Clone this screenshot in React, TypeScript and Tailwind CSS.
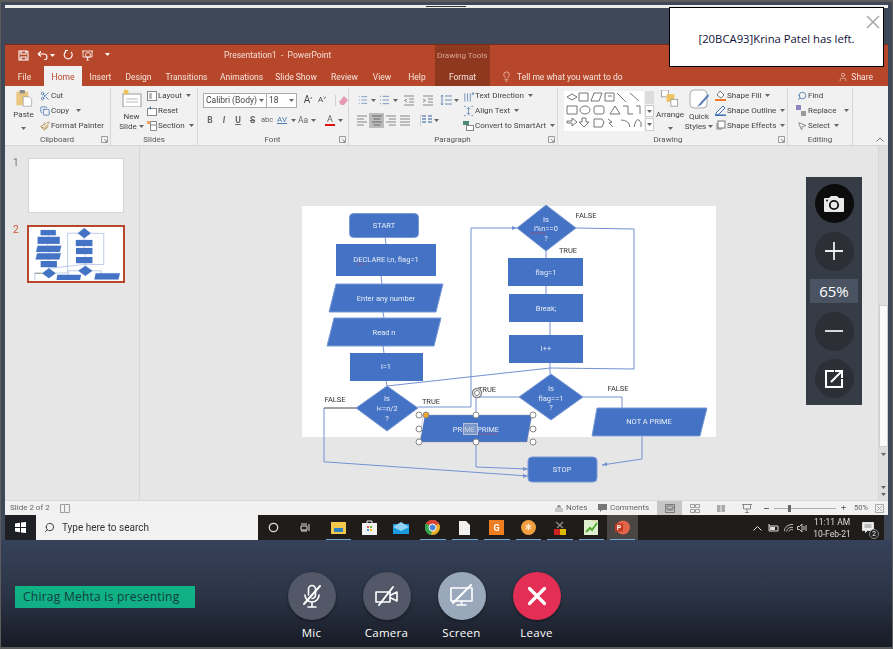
import React from "react";
import { Scissors, Copy, Paintbrush, Search, Lightbulb, User, MousePointer2 } from "lucide-react";

const Caret = ({ c = "#666" }: { c?: string }) => (
  <svg width="5" height="3" viewBox="0 0 5 3" className="inline-block shrink-0"><path d="M0 0h5L2.5 3z" fill={c} /></svg>
);

const FW = ({ w, c, children, cls = "" }: { w: number; c?: boolean; children?: React.ReactNode; cls?: string }) => (
  <div style={{ width: w }} className={`shrink-0 flex items-center ${c === false ? "" : "justify-center"} ${cls}`}>{children}</div>
);

const Row = ({ icon, text, caret, w }: { icon: React.ReactNode; text: string; caret?: boolean; w?: number }) => (
  <div className="h-[15px] flex items-center whitespace-nowrap gap-[1px]" style={{ width: w }}>
    <span className="w-[11px] h-[13px] flex items-center justify-center shrink-0">{icon}</span>
    <span>{text}</span>
    {caret && <span className="ml-[3px] flex"><Caret /></span>}
  </div>
);

const Launcher = () => (
  <svg width="7" height="7" viewBox="0 0 7 7" className="shrink-0"><path d="M.5 6.5v-6h6v6zM3 3l3 3M6 4v2H4" fill="none" stroke="#888" strokeWidth=".8" /></svg>
);

const Group = ({ w, label, children, launcher, lx = 0 }: { w: number; label: string; children: React.ReactNode; launcher?: boolean; lx?: number }) => (
  <div style={{ width: w }} className="shrink-0 h-full flex flex-col border-r border-[#d6d6d6]">
    <div className="h-[46px] flex overflow-hidden">{children}</div>
    <div className="h-[11px] flex items-center text-[#555]">
      <div className="flex-1 text-center" style={{ paddingLeft: lx }}>{label}</div>
      {launcher && <span className="mr-[2px]"><Launcher /></span>}
    </div>
  </div>
);

const LineIcon = ({ d, c = "#666", w = 12, h = 12, sw = 1 }: { d: string; c?: string; w?: number; h?: number; sw?: number }) => (
  <svg width={w} height={h} viewBox="0 0 12 12"><path d={d} fill="none" stroke={c} strokeWidth={sw} /></svg>
);

const Para = ({ pts, fill = "#4472c4", stroke = "#7b9ad6" }: { pts: string; fill?: string; stroke?: string }) => <polygon points={pts} fill={fill} stroke={stroke} strokeWidth="1" />;

const FlowShapes = ({ lw = 1, lc = "#7391d2" }: { lw?: number; lc?: string }) => (
  <g>
    <g fill="none" stroke={lc} strokeWidth={lw}>
      <path d="M385 237l1 7M381 276l1 8M383 312l1 6M383 346l1 7M386 381l1 5" />
      <path d="M387 386L550 368M550 363v11M550 368l84 1V229l-58-1" />
      <path d="M517 228h-46v179h-53M546 251v7M546 286v8M550 322v13" />
      <path d="M519 397h-43v18M583 397h39v11" />
      <path d="M476 442v25l52 2M642 436v23l-40 6" />
      <path d="M324 408v54h3l201 14" />
    </g>
    <path d="M356 408h-32" stroke="#444" strokeWidth={lw} />
    <g fill={lc}>
      <path d="M517 228l-5-2v4zM528 469l-5-2v4zM528 476l-5-2v4zM602 465l5-3v4z" />
    </g>
    <rect x="349.5" y="213.5" width="69" height="24" rx="4" fill="#4472c4" stroke="#7b9ad6" />
    <rect x="336" y="244" width="100" height="32" fill="#4472c4" />
    <Para pts="336,284 443,284 436,312 329,312" />
    <Para pts="334,318 441,318 434,346 327,346" />
    <rect x="350" y="353" width="73" height="28" fill="#4472c4" />
    <Para pts="387,386 418,408 387,431 356,408" />
    <Para pts="546,205 576,228 546,251 517,228" />
    <rect x="508" y="258" width="75" height="28" fill="#4472c4" />
    <rect x="509" y="294" width="74" height="28" fill="#4472c4" />
    <rect x="509" y="335" width="74" height="28" fill="#4472c4" />
    <Para pts="551,374 583,397 551,420 519,397" />
    <Para pts="597,408 707,408 700,436 592,436" />
    <polygon points="425,415 532,415 527,442 420,442" fill="#4472c4" />
    <rect x="528" y="457" width="69" height="25" rx="4" fill="#4472c4" stroke="#7b9ad6" />
  </g>
);

const T = ({ x, y, children, fill = "#e8eef8", anchor = "middle", size = 7.5 }: { x: number; y: number; children: React.ReactNode; fill?: string; anchor?: "middle" | "start"; size?: number }) => (
  <text x={x} y={y} fill={fill} fontSize={size} textAnchor={anchor} fontFamily="Roboto, sans-serif">{children}</text>
);

const Handle = ({ x, y, c = "#fff" }: { x: number; y: number; c?: string }) => <circle cx={x} cy={y} r="3" fill={c} stroke="#888" strokeWidth="1" />;

const Canvas = () => (
  <svg width="738" height="354" viewBox="140 146 738 354" className="block">
    <rect x="302" y="206" width="414" height="231" fill="#fff" />
    <FlowShapes />
    <T x={384} y={227.5}>START</T>
    <T x={386} y={262}>DECLARE i,n, flag=1</T>
    <T x={386} y={300.500}>Enter any number</T>
    <T x={384} y={334.500}>Read n</T>
    <T x={386} y={369}>i=1</T>
    <T x={387} y={401}>Is</T>
    <T x={387} y={411}>i&lt;=n/2</T>
    <T x={387} y={421}>?</T>
    <T x={546} y={221.500}>Is</T>
    <T x={546} y={231}>i%n==0</T>
    <T x={546} y={240.500}>?</T>
    <T x={546} y={274.500}>flag=1</T>
    <T x={546} y={310.500}>Break;</T>
    <T x={546} y={351}>i++</T>
    <T x={551} y={391}>Is</T>
    <T x={551} y={400.500}>flag==1</T>
    <T x={551} y={410}>?</T>
    <T x={649} y={423.500}>NOT A PRIME</T>
    <T x={476} y={431.500}>PRIME PRIME</T>
    <T x={562} y={471.500}>STOP</T>
    <path d="M531 233h14M357 264h10M478 434h20" stroke="#d33" strokeWidth=".7" strokeDasharray="1.5 1" fill="none" />
    <T x={586} y={218} fill="#333">FALSE</T>
    <T x={568} y={253} fill="#333">TRUE</T>
    <T x={335} y={402} fill="#333">FALSE</T>
    <T x={431} y={404} fill="#333">TRUE</T>
    <T x={487} y={392} fill="#333">TRUE</T>
    <T x={618} y={391} fill="#333">FALSE</T>
    <rect x="463.5" y="423.5" width="14" height="11" fill="#a9b6d0" fillOpacity="0.55" stroke="#b9c3d8" />
    <path d="M423 415h109l-5 27H420z" fill="none" stroke="#999" strokeDasharray="1 1" strokeWidth=".8" />
    <circle cx="477" cy="393" r="4.5" fill="#fff" stroke="#888" strokeWidth="1.5" />
    <circle cx="477" cy="393" r="2.5" fill="none" stroke="#888" strokeWidth="1" />
    {[[419, 415], [476, 415], [533, 415], [419, 429], [533, 429], [419, 442], [476, 442], [533, 442]].map(([x, y]) => (
      <Handle key={`${x}-${y}`} x={x} y={y} />
    ))}
    <Handle x={426} y={415} c="#efa52f" />
  </svg>
);

const ShapesGallery = () => (
  <svg width="80" height="40" viewBox="0 0 80 40" className="block">
    <g fill="none" stroke="#666" strokeWidth=".9">
      <path d="M3 6l5-3 5 3-5 3zM15 2h9v8h-9zM27 10l3-8h8l-3 8zM41 2h9v8h-9zM44 5h4M53 2l9 9M66 2l9 8" />
      <path d="M3 15h10v8H3z" /><ellipse cx="21" cy="19" rx="5" ry="4" /><rect x="30" y="15" width="10" height="8" rx="2" />
      <path d="M46 23l5-8 5 8zM59 15h5v8h5M72 15h4v8" />
      <path d="M3 30h5v-3l5 4-5 4v-3H3zM18 27h4v4h3l-5 5-5-5h3zM30 28h8l2 3-2 5h-8zM44 28l4 3-3 1 4 4M57 29q8 0 9 7M70 36q2-9 5-7t2 7" />
    </g>
  </svg>
);

const Thumb = () => (
  <svg width="92" height="52" viewBox="302 206 414 231" className="block">
    <rect x="302" y="206" width="414" height="231" fill="#fff" />
    <FlowShapes lw={3} lc="#9db4e2" />
  </svg>
);

const TaskIcon = ({ w = 31, active, line = true, children }: { w?: number; active?: boolean; line?: boolean; children: React.ReactNode }) => (
  <div style={{ width: w }} className={`relative h-full shrink-0 flex items-center justify-center ${active ? "bg-[#4a4644]" : ""}`}>
    {children}
    {line && <span className="absolute bottom-0 left-[3px] right-[3px] h-[1px] bg-[#6fa8d8]" />}
  </div>
);

const CircleBtn = ({ bg, label, children }: { bg: string; label: string; children: React.ReactNode }) => (
  <div className="w-[75px] flex flex-col items-center">
    <div style={{ backgroundColor: bg }} className="w-[48px] h-[48px] rounded-full flex items-center justify-center shadow-[0_1px_3px_rgba(0,0,0,0.45)]">{children}</div>
    <div className="mt-[5px] text-[11.5px] leading-[16px] text-white tracking-[0.3px] font-['Open_Sans',sans-serif]">{label}</div>
  </div>
);

const ZoomBtn = ({ dark, children }: { dark?: boolean; children: React.ReactNode }) => (
  <div className={`w-[39px] h-[39px] rounded-full flex items-center justify-center ${dark ? "bg-[#0c0c0c]" : "bg-[#2c2f35]"}`}>{children}</div>
);

export default function App() {
  return (
    <div className="relative w-[893px] h-[649px] overflow-hidden flex flex-col border-x border-y-2 border-[#5c5c5c] bg-[#3e4859] font-['Roboto',sans-serif]">
      {/* Top bar */}
      <div className="h-[42px] shrink-0 px-[4px] pt-[3px]">
        <div className="relative h-[3px] bg-[#eeeeee]">
          <span className="absolute left-[421px] top-[1px] w-[40px] h-[1px] bg-[#333]" />
        </div>
      </div>

      {/* Shared screen */}
      <div className="mx-[4px] h-[496px] shrink-0 flex flex-col blur-[0.4px] text-[8px] leading-[10px] text-[#444]">
        {/* Title bar */}
        <div className="h-[22px] shrink-0 flex bg-[#b7472a] border-t border-[#7c2c16] text-[#f6e3dc] pb-[1px]">
          <div className="w-[219px] flex items-center pl-[13px] gap-[8px]">
            <svg width="11" height="11" viewBox="0 0 11 11"><path d="M1 1h8l1 1v8H1zM3 1v3h5V1M3 10V7h5v3" fill="none" stroke="#fff" strokeWidth="1.1" /></svg>
            <span className="flex items-center gap-[2px]">
              <svg width="11" height="9" viewBox="0 0 11 9"><path d="M1 3l3-2.5M1 3l3 2.5M1 3h6q3 0 3 3t-3 3" fill="none" stroke="#fff" strokeWidth="1.1" /></svg>
              <Caret c="#fff" />
            </span>
            <svg width="10" height="10" viewBox="0 0 10 10"><path d="M3 1.5a4 4 0 1 0 5 .5M5 .5h-2.5v2.5" fill="none" stroke="#fff" strokeWidth="1.1" /></svg>
            <svg width="13" height="11" viewBox="0 0 13 11"><path d="M1 1h11M2 1v6h9V1M6.500 7v3M5 10h3" fill="none" stroke="#fff" strokeWidth=".8" /><circle cx="7" cy="5" r="2.500" fill="none" stroke="#fff" strokeWidth=".8" /></svg>
            <span className="ml-[3px]"><Caret c="#fff" /></span>
          </div>
          <div className="w-[211px] flex items-center text-[8.5px] text-[#f3ddd5] whitespace-pre">Presentation1  -  PowerPoint</div>
          <div className="w-[55px] -mb-[1px] bg-[#8f3820] flex items-center pl-[2px] text-[#d9a594] text-[8px] whitespace-nowrap">Drawing Tools</div>
          <div className="flex-1" />
        </div>
        {/* Tabs */}
        <div className="h-[20px] shrink-0 flex bg-[#b7472a] text-[#f6e3dc] text-[8.5px]">
          <FW w={39} cls="pt-[1px]">File</FW>
          <FW w={38} cls="pt-[1px] bg-[#f1f1f1] text-[#b7472a]">Home</FW>
          <FW w={37} cls="pt-[1px]">Insert</FW>
          <FW w={39} cls="pt-[1px]">Design</FW>
          <FW w={57} cls="pt-[1px]">Transitions</FW>
          <FW w={53} cls="pt-[1px]">Animations</FW>
          <FW w={56} cls="pt-[1px]">Slide Show</FW>
          <FW w={41} cls="pt-[1px]">Review</FW>
          <FW w={34} cls="pt-[1px]">View</FW>
          <FW w={36} cls="pt-[1px]">Help</FW>
          <FW w={55} cls="pt-[1px] bg-[#8f3820]">Format</FW>
          <div className="ml-[11px] pt-[1px] flex items-center gap-[5px]">
            <Lightbulb size={11} color="#f6e3dc" strokeWidth={1.4} />
            <span>Tell me what you want to do</span>
          </div>
          <div className="ml-auto mr-[15px] pt-[1px] flex items-center gap-[3px]">
            <User size={10} color="#f6e3dc" strokeWidth={1.4} />
            <span>Share</span>
          </div>
        </div>
        {/* Ribbon */}
        <div className="h-[60px] shrink-0 flex bg-[#f1f1f1] border-b border-[#d6d6d6] pt-[2px]">
          <Group w={106} label="Clipboard" launcher lx={8}>
            <div className="w-[34px] flex flex-col items-center pt-[2px] pl-[3px]">
              <svg width="20" height="20" viewBox="0 0 20 20"><rect x="1" y="2" width="14" height="16" fill="#e9c77e" /><rect x="5" y="0" width="6" height="4" fill="#8a8a8a" /><path d="M9 8h7l3 3v8H9z" fill="#fff" stroke="#888" strokeWidth=".7" /></svg>
              <div className="mt-[3px]">Paste</div>
              <div className="mt-[4px]"><Caret /></div>
            </div>
            <div className="flex flex-col">
              <Row icon={<Scissors size={10} color="#4a7ab5" />} text="Cut" />
              <div className="flex items-center">
                <Row icon={<Copy size={10} color="#4a7ab5" />} text="Copy" /><span className="ml-[7px]"><Caret /></span>
              </div>
              <Row icon={<Paintbrush size={10} color="#b08a3c" />} text="Format Painter" />
            </div>
          </Group>
          <Group w={87} label="Slides">
            <div className="w-[35px] flex flex-col items-center pt-[1px] pl-[6px]">
              <svg width="20" height="18" viewBox="0 0 20 18"><rect x="1" y="5" width="18" height="13" fill="#fff" stroke="#999" /><path d="M4 10h12M4 13h12" stroke="#bbb" /><circle cx="4" cy="3" r="2.500" fill="#efc25b" /></svg>
              <div className="mt-[5px] text-center leading-[10px] whitespace-nowrap">New<br />Slide <Caret /></div>
            </div>
            <div className="flex flex-col">
              <Row icon={<svg width="10" height="10"><rect x=".5" y=".5" width="9" height="9" fill="#fff" stroke="#888" /><rect x="2" y="2" width="3" height="6" fill="#bbb" /></svg>} text="Layout" caret />
              <Row icon={<svg width="10" height="10"><rect x=".5" y="2.500" width="9" height="7" fill="#fff" stroke="#888" /><path d="M2 2l2-2v4z" fill="#4a7ab5" /></svg>} text="Reset" />
              <Row icon={<svg width="10" height="10"><path d="M3.500 .5h6v9h-6zM3.500 4h6" fill="#fff" stroke="#888" /><rect x="0" y="0" width="3" height="3" fill="#efa55b" /></svg>} text="Section" caret />
            </div>
          </Group>
          <Group w={151} label="Font" launcher lx={8}>
            <div className="flex flex-col pl-[5px] pt-[4px]">
              <div className="flex items-center h-[16px]">
                <div className="w-[64px] h-[15px] bg-white border border-[#ababab] flex items-center justify-between pl-[2px] pr-[2px] text-[8.5px]">Calibri (Body)<Caret /></div>
                <div className="w-[30px] h-[15px] bg-white border border-[#ababab] border-l-0 flex items-center justify-between pl-[2px] pr-[2px] text-[8.5px]">18<Caret /></div>
                <span className="ml-[4px] w-[14px] text-center text-[10px]">A<sup className="text-[5px]">^</sup></span>
                <span className="w-[14px] text-center text-[8px]">A<sup className="text-[5px]">˅</sup></span>
                <span className="ml-[6px] w-[14px] flex justify-center border-l border-[#d0d0d0] pl-[2px]">
                  <svg width="11" height="11" viewBox="0 0 11 11"><path d="M1 7l5-6 4 4-4 5H3z" fill="#e59ab0" /></svg>
                </span>
              </div>
              <div className="flex items-center h-[16px] mt-[4px] text-[8.5px] font-bold text-[#666]">
                <FW w={14}>B</FW>
                <FW w={14} cls="italic">I</FW>
                <FW w={14} cls="underline">U</FW>
                <FW w={15} cls="line-through">S</FW>
                <FW w={14} cls="font-normal text-[7.5px]">abc</FW>
                <FW w={16} cls="font-normal text-[8px] text-[#4a7ab5] underline">AV</FW>
                <FW w={6}><Caret /></FW>
                <FW w={14} cls="font-normal">Aa</FW>
                <FW w={6}><Caret /></FW>
                <FW w={7} />
                <FW w={14}><span className="border-b-2 border-[#e01010] leading-[10px] font-normal text-[9px] px-[2px]">A</span></FW>
                <FW w={7}><Caret /></FW>
              </div>
            </div>
          </Group>
          <Group w={209} label="Paragraph" launcher lx={8}>
            <div className="flex flex-col pl-[9px] pt-[4px] w-[114px]">
              <div className="h-[16px] flex items-center">
                <FW w={10}><LineIcon d="M4 2h7M4 6h7M4 10h7M1 2h1M1 6h1M1 10h1" c="#6d8fb8" /></FW><FW w={11}><Caret /></FW>
                <FW w={11}><LineIcon d="M4 2h7M4 6h7M4 10h7M1 2h1M1 6h1M1 10h1" c="#6d8fb8" /></FW><FW w={10}><Caret /></FW>
                <FW w={18}><LineIcon d="M1 2h10M6 5h5M6 8h5M1 11h10M4 5L1.500 6.500 4 8" c="#888" /></FW>
                <FW w={20}><LineIcon d="M1 2h10M6 5h5M6 8h5M1 11h10M1 5l2.500 1.500L1 8" c="#888" /></FW>
                <FW w={15}><LineIcon d="M5 2h7M5 6h7M5 10h7M2 1v10M1 2.500l1-1.500 1 1.500M1 9.500l1 1.500 1-1.500" c="#6d8fb8" /></FW>
                <FW w={7}><Caret /></FW>
              </div>
              <div className="h-[16px] flex items-center mt-[4px] -ml-[3px]">
                <FW w={14}><LineIcon d="M1 2h10M1 5h7M1 8h10M1 11h7" c="#888" /></FW>
                <FW w={15} cls="h-[15px] bg-[#bcbcbc]"><LineIcon d="M1 2h10M2.500 5h7M1 8h10M2.500 11h7" c="#666" /></FW>
                <FW w={14}><LineIcon d="M1 2h10M4 5h7M1 8h10M4 11h7" c="#888" /></FW>
                <FW w={14}><LineIcon d="M1 2h10M1 5h10M1 8h10M1 11h10" c="#888" /></FW>
                <FW w={8} />
                <FW w={13} cls="border-l border-[#d0d0d0]"><LineIcon d="M1 2h4M7 2h4M1 5h4M7 5h4M1 8h4M7 8h4" c="#6d8fb8" sw={1.5} /></FW>
                <FW w={7}><Caret /></FW>
              </div>
            </div>
            <div className="flex flex-col">
              <Row icon={<LineIcon d="M2 3v9M5 3v9M8 3v9M10 5l1-3 1 3" c="#6d8fb8" />} text="Text Direction" caret />
              <Row icon={<LineIcon d="M1 1h2M1 11h2M9 1h2M9 11h2M6 2v8M4 4l2-2 2 2M4 8l2 2 2-2" c="#6d8fb8" />} text="Align Text" caret />
              <Row icon={<svg width="11" height="11"><rect x="0" y="1" width="6" height="4" fill="#4d8a78" /><rect x="3.500" y="5.500" width="7" height="5" fill="#fff" stroke="#888" /></svg>} text="Convert to SmartArt" caret />
            </div>
          </Group>
          <Group w={230} label="Drawing" launcher lx={0}>
            <div className="pl-[6px] pt-[3px] flex">
              <div className="w-[80px] h-[40px] bg-white"><ShapesGallery /></div>
              <div className="w-[9px] h-[40px] flex flex-col gap-[1px] ml-[1px]">
                <div className="h-[13px] bg-[#dcdcdc]" />
                <div className="h-[12px] bg-white border border-[#ccc] flex items-center justify-center"><Caret /></div>
                <div className="h-[13px] bg-white border border-[#ccc] flex items-center justify-center"><Caret /></div>
              </div>
            </div>
            <div className="w-[26px] ml-[3px] flex flex-col items-center pt-[2px]">
              <svg width="20" height="20" viewBox="0 0 20 20"><rect x="0" y="0" width="8" height="8" fill="#fff" stroke="#999" /><rect x="6" y="5" width="9" height="9" fill="#efc25b" /><rect x="11" y="11" width="8" height="8" fill="#fff" stroke="#999" /></svg>
              <div className="mt-[3px]">Arrange</div>
              <div className="mt-[4px]"><Caret /></div>
            </div>
            <div className="w-[28px] ml-[2px] flex flex-col items-center pt-[1px]">
              <svg width="20" height="20" viewBox="0 0 20 20"><rect x="1" y="1" width="17" height="18" rx="4" fill="#fff" stroke="#aaa" /><path d="M19 5l-8 9-3 4 4-2 8-9z" fill="#5a7fb8" /></svg>
              <div className="mt-[3px] text-center leading-[10px] whitespace-nowrap">Quick<br />Styles <Caret /></div>
            </div>
            <div className="flex flex-col pl-[2px]">
              <Row icon={<svg width="11" height="11"><path d="M5 1l4 4-3 3-4-3z" fill="#fff" stroke="#777" /><rect x="0" y="9" width="11" height="2" fill="#ef7b2f" /></svg>} text="Shape Fill" caret />
              <Row icon={<svg width="11" height="11"><path d="M1 8l7-7 2 2-7 7H1z" fill="#fff" stroke="#3d6fb8" /><rect x="0" y="9.500" width="11" height="1.500" fill="#3d6fb8" /></svg>} text="Shape Outline" caret />
              <Row icon={<svg width="11" height="11"><rect x="1" y="3" width="6" height="7" fill="#bbb" /><rect x="3" y="1" width="7" height="7" fill="#fff" stroke="#777" /></svg>} text="Shape Effects" caret />
            </div>
          </Group>
          <Group w={65} label="Editing">
            <div className="flex flex-col pl-[8px]">
              <Row icon={<Search size={10} color="#4a7ab5" className="-scale-x-100" />} text="Find" />
              <div className="flex items-center">
                <Row icon={<svg width="11" height="11"><rect x="0" y="0" width="5" height="5" fill="#8c86c0" /><rect x="5" y="6" width="5" height="5" fill="#999" /></svg>} text="Replace" /><span className="ml-[8px]"><Caret /></span>
              </div>
              <Row icon={<MousePointer2 size={10} color="#777" />} text="Select" caret />
            </div>
          </Group>
          <div className="flex-1 relative">
            <svg width="8" height="5" viewBox="0 0 8 5" className="absolute right-[4px] bottom-[3px]"><path d="M.5 4.500L4 1l3.500 3.500" fill="none" stroke="#777" /></svg>
          </div>
        </div>

        {/* Main */}
        <div className="flex-1 min-h-0 flex bg-[#e6e6e6]">
          <div className="w-[135px] shrink-0 border-r border-[#d6d6d6] pt-[12px] flex flex-col gap-[12px]">
            <div className="flex pl-[8px]">
              <span className="w-[15px] text-[10px] leading-[10px] text-[#777]">1</span>
              <div className="w-[96px] h-[55px] bg-white border border-[#d4d4d4]" />
            </div>
            <div className="flex pl-[8px]">
              <span className="w-[14px] text-[10px] leading-[10px] text-[#d0563a]">2</span>
              <div className="w-[98px] h-[58px] bg-white border-2 border-[#b7472a] p-[1px]"><Thumb /></div>
            </div>
          </div>
          <div className="flex-1 min-w-0 overflow-hidden"><Canvas /></div>
          <div className="w-[10px] shrink-0 bg-[#dedede] flex flex-col border-l border-[#d6d6d6]">
            <div className="h-[159px]" />
            <div className="h-[142px] bg-[#fafafa] border border-[#cfcfcf]" />
            <div className="mt-[2px] h-[10px] flex items-center justify-center"><Caret /></div>
            <div className="mt-auto mb-[4px] flex flex-col items-center gap-[4px]"><Caret /><Caret /></div>
          </div>
        </div>

        {/* Status bar */}
        <div className="h-[15px] shrink-0 flex items-center bg-[#f1f1f1] border-t border-[#d8d8d8] text-[8px] text-[#666]">
          <span className="ml-[5px] w-[50px] whitespace-nowrap">Slide 2 of 2</span>
          <svg width="10" height="9" viewBox="0 0 10 9"><path d="M.5.500h4v8h-4zM5 .500h4.500v8H5" fill="none" stroke="#888" strokeWidth=".8" /></svg>
          <div className="ml-auto flex items-center h-full">
            <span className="flex items-center gap-[3px] w-[43px]"><svg width="8" height="7"><path d="M4 0l2 2H2zM0 4h8M0 6h8" stroke="#888" fill="#888" strokeWidth=".8" /></svg>Notes</span>
            <span className="flex items-center gap-[3px] w-[59px]"><svg width="9" height="8"><path d="M0 0h9v6H4L2 8V6H0z" fill="#777" /></svg>Comments</span>
            <FW w={25} cls="h-full bg-[#c6c6c6]"><svg width="10" height="9"><path d="M.5.500h9v8h-9zM2 6h6M2 2h6v3H2z" fill="none" stroke="#666" strokeWidth=".8" /></svg></FW>
            <FW w={26}><svg width="10" height="9"><path d="M.5.500h4v3h-4zM5.500.500h4v3h-4zM.5 5.500h4v3h-4zM5.500 5.500h4v3h-4z" fill="none" stroke="#888" strokeWidth=".8" /></svg></FW>
            <FW w={26}><svg width="10" height="9"><path d="M1 1h8v7H1z" fill="#aaa" /><path d="M5 0v9" stroke="#eee" /></svg></FW>
            <FW w={26}><svg width="10" height="9"><path d="M0 .500h10M1.500 1v4h7V1M5 5v4M3 8.500h4" fill="none" stroke="#888" /></svg></FW>
            <div className="ml-[4px] w-[82px] flex items-center gap-[5px]">
              <span className="w-[5px] h-[1px] bg-[#666]" />
              <div className="relative flex-1 h-[1px] bg-[#b0b0b0]"><span className="absolute left-[14px] -top-[3px] w-[3px] h-[7px] bg-[#666]" /></div>
              <span className="text-[9px] leading-[9px]">+</span>
            </div>
            <span className="ml-[8px] w-[21px] text-[7.5px]">50%</span>
            <svg width="9" height="9" viewBox="0 0 9 9" className="mr-[4px]"><path d="M.5.500h8v8h-8zM2 2l5 5M7 2l-5 5" fill="none" stroke="#999" strokeWidth=".8" /></svg>
          </div>
        </div>

        {/* Taskbar */}
        <div className="h-[25px] shrink-0 mr-[4px] flex bg-[#1f1c1a] text-[#eee]">
          <div className="w-[31px] bg-[#1f2026] flex items-center justify-center">
            <svg width="11" height="11" viewBox="0 0 11 11"><path d="M0 1.500l5-.7V5H0zM6 .6L11 0v5H6zM0 6h5v4.200l-5-.7zM6 6h5v5l-5-.6z" fill="#fff" /></svg>
          </div>
          <div className="w-[222px] bg-[#f2f2f2] flex items-center pl-[8px] text-[#333] text-[10px]">
            <Search size={11} color="#333" className="-scale-x-100" />
            <span className="ml-[7px]">Type here to search</span>
          </div>
          <TaskIcon line={false}><svg width="11" height="11"><circle cx="5.500" cy="5.500" r="4.200" fill="none" stroke="#ddd" strokeWidth="1.300" /></svg></TaskIcon>
          <TaskIcon line={false}><svg width="11" height="11"><path d="M2 2h6M2 9h6M2 4h6v4H2zM10 2v7" fill="none" stroke="#ddd" /></svg></TaskIcon>
          <div className="w-[2.5px] shrink-0" />
          <TaskIcon><svg width="15" height="13"><rect y="1" width="15" height="12" fill="#f2c94c" /><rect x="3" y="7" width="9" height="4" fill="#2f7fb8" /></svg></TaskIcon>
          <TaskIcon line={false}><svg width="15" height="15"><rect y="3" width="15" height="12" fill="#f2f2f2" /><path d="M5 3V1h5v2" stroke="#eee" fill="none" /><rect x="5" y="6" width="2" height="2" fill="#e55" /><rect x="8" y="6" width="2" height="2" fill="#6b3" /><rect x="5" y="9" width="2" height="2" fill="#39d" /><rect x="8" y="9" width="2" height="2" fill="#fb0" /></svg></TaskIcon>
          <TaskIcon w={32} line={false}><svg width="16" height="12"><rect y="2" width="16" height="10" fill="#1b9be0" /><path d="M0 5l8-5 8 5-8 4z" fill="#8fd3f4" /></svg></TaskIcon>
          <TaskIcon w={32}><svg width="15" height="15" viewBox="0 0 15 15"><circle cx="7.500" cy="7.500" r="7.500" fill="#e8b02c" /><path d="M7.500 7.500L1 3.500A7.500 7.500 0 0 1 14 3.500z" fill="#d94336" /><path d="M7.500 7.500L1 3.500A7.500 7.500 0 0 0 6 15z" fill="#35a652" /><circle cx="7.500" cy="7.500" r="3.500" fill="#4a85d6" stroke="#fff" /></svg></TaskIcon>
          <TaskIcon w={32}><svg width="11" height="14"><path d="M0 0h7l4 4v10H0z" fill="#f0f0f0" /></svg></TaskIcon>
          <TaskIcon w={32}><div className="w-[15px] h-[15px] bg-[#ef7d22] flex items-center justify-center text-white text-[9px] font-bold">G</div></TaskIcon>
          <TaskIcon w={31.5}><div className="w-[15px] h-[15px] rounded-full bg-[#f0a040] flex items-center justify-center text-white text-[8px] leading-none">✻</div></TaskIcon>
          <TaskIcon w={31.5}><svg width="12" height="14"><rect x="0" y="8" width="6" height="6" fill="#c22" /><rect x="6" y="8" width="6" height="6" fill="#db0" /><path d="M2 1l7 6M9 1L3 7" stroke="#888" strokeWidth="1.500" /></svg></TaskIcon>
          <TaskIcon w={31}><svg width="14" height="15"><rect width="14" height="15" fill="#dff0d0" /><path d="M2 12l4-4 2 2 5-7" stroke="#5a3" strokeWidth="2" fill="none" /><path d="M8 1h6" stroke="#cc9" /></svg></TaskIcon>
          <TaskIcon w={31} active><svg width="16" height="15" viewBox="0 0 16 15"><circle cx="9" cy="7.500" r="7" fill="#e0654a" /><rect x="1" y="3.500" width="8" height="8" fill="#c33c20" /><text x="5" y="10" fontSize="7" fill="#fff" textAnchor="middle" fontFamily="Roboto, sans-serif" fontWeight="700">P</text></svg></TaskIcon>
          <div className="ml-auto flex items-center h-full pr-[3px]">
            <svg width="9" height="6" viewBox="0 0 9 6" className="mr-[6px]"><path d="M.5 5.500l4-4 4 4" fill="none" stroke="#ddd" /></svg>
            <svg width="11" height="8" viewBox="0 0 11 8" className="mr-[5px]"><path d="M1 2h9v5H1z" fill="none" stroke="#ddd" /><rect x="2" y="3" width="5" height="3" fill="#ddd" /><path d="M1 0v2" stroke="#ddd" /></svg>
            <svg width="10" height="9" viewBox="0 0 10 9" className="mr-[3px]"><path d="M0 8.500a8 8 0 0 1 9-7M2.500 8.500a5 5 0 0 1 6.500-4M5 8.500a2.500 2.500 0 0 1 4-1.500" fill="none" stroke="#bbb" /></svg>
            <svg width="10" height="10" viewBox="0 0 10 10" className="mr-[2px]"><path d="M.5 3.500h2l2.500-2.500v8L2.500 6.500h-2zM7 3v4M9 2v6" fill="none" stroke="#ccc" /></svg>
            <div className="w-[46px] text-center text-[8.5px] leading-[12px] text-[#ddd] whitespace-nowrap">11:11 AM<br />10-Feb-21</div>
            <div className="relative w-[26px] h-full flex items-center justify-center">
              <svg width="13" height="12" viewBox="0 0 13 12"><path d="M.5.500h11v8h-6l-2 2v-2h-3z" fill="#eee" stroke="#ddd" /><path d="M2.500 3h7M2.500 5h7" stroke="#888" /></svg>
              <span className="absolute right-[2px] bottom-[1px] w-[10px] h-[10px] rounded-full bg-[#222] border border-[#888] text-[6.5px] leading-[8px] text-center text-white">2</span>
            </div>
          </div>
        </div>
      </div>

      {/* Bottom call bar */}
      <div className="flex-1 min-h-0 relative flex items-start bg-gradient-to-b from-[#36425a] via-[#2c3547] to-[#171b25]">
        <div className="ml-[14px] mt-[46px] w-[180px] h-[22px] bg-gradient-to-b from-[#10b383] to-[#12ad86] flex items-center pl-[8px] text-[12px] tracking-[0.25px] text-[#123c3e] whitespace-nowrap font-['Open_Sans',sans-serif]">Chirag Mehta is presenting</div>
        <div className="ml-[79px] mt-[32px] flex">
          <CircleBtn bg="#525867" label="Mic">
            <svg width="24" height="26" viewBox="0 0 24 26" fill="none" stroke="#fff" strokeWidth="1.600" strokeLinecap="round"><path d="M8.500 12V6a3.500 3.500 0 0 1 7 0v6a3.500 3.500 0 0 1-3.500 3.500" /><path d="M5 12a7 7 0 0 0 7 7 7 7 0 0 0 7-7M12 19v4M8 24h8" /><path d="M20 3L4 21" strokeWidth="2" /></svg>
          </CircleBtn>
          <CircleBtn bg="#525867" label="Camera">
            <svg width="24" height="22" viewBox="0 0 24 22" fill="none" stroke="#fff" strokeWidth="1.600" strokeLinecap="round" strokeLinejoin="round"><path d="M1 7h14v10H1zM16 10l6-3v9l-6-3" /><path d="M18 2L4 20" strokeWidth="2" /></svg>
          </CircleBtn>
          <CircleBtn bg="#9aa8bc" label="Screen">
            <svg width="24" height="24" viewBox="0 0 24 24" fill="none" stroke="#fff" strokeWidth="1.600" strokeLinecap="round" strokeLinejoin="round"><path d="M1 4h21v13H1zM11.500 17v3M7 21h9" /><path d="M21 1L3 19" strokeWidth="2" /></svg>
          </CircleBtn>
          <CircleBtn bg="#e32e56" label="Leave">
            <svg width="20" height="20" viewBox="0 0 20 20" fill="none" stroke="#fff" strokeWidth="3.200" strokeLinecap="round"><path d="M2.500 2.500l15 15M17.500 2.500l-15 15" /></svg>
          </CircleBtn>
        </div>
      </div>

      {/* Toast */}
      <div className="absolute left-[668px] top-[5px] w-[215px] h-[60px] bg-white border border-black flex items-center justify-center pt-[4px] text-[11.3px] text-[#10103a] font-['Open_Sans',sans-serif]">
        [20BCA93]Krina Patel has left.
        <svg width="14" height="14" viewBox="0 0 14 14" className="absolute right-[3px] top-[7px]"><path d="M1 1l12 12M13 1L1 13" stroke="#a8a8a8" strokeWidth="1.500" /></svg>
      </div>

      {/* Zoom panel */}
      <div className="absolute left-[805px] top-[175px] w-[56px] h-[228px] bg-[#363c46] flex flex-col items-center pt-[7px] gap-[8.5px]">
        <ZoomBtn dark>
          <svg width="22" height="18" viewBox="0 0 22 18"><path d="M2 3h4l2-2h6l2 2h4a1 1 0 0 1 1 1v12a1 1 0 0 1-1 1H2a1 1 0 0 1-1-1V4a1 1 0 0 1 1-1z" fill="#eaeaea" /><circle cx="11" cy="10" r="4.200" fill="#eaeaea" stroke="#111" strokeWidth="1.800" /><circle cx="4" cy="5.500" r="1" fill="#111" /></svg>
        </ZoomBtn>
        <ZoomBtn>
          <svg width="20" height="20" viewBox="0 0 20 20"><path d="M10 1v18M1 10h18" stroke="#eee" strokeWidth="1.800" /></svg>
        </ZoomBtn>
        <div className="w-[48px] h-[24px] bg-[#4a5361] flex items-center justify-center text-[15px] text-white font-['Open_Sans',sans-serif]">65%</div>
        <ZoomBtn>
          <svg width="20" height="4" viewBox="0 0 20 4"><path d="M1 2h18" stroke="#eee" strokeWidth="1.800" /></svg>
        </ZoomBtn>
        <ZoomBtn>
          <svg width="20" height="20" viewBox="0 0 20 20" fill="none" stroke="#fff" strokeWidth="2"><path d="M10 2H2v16h16v-8" /><path d="M7 13L18 2M11 2h7v7" /></svg>
        </ZoomBtn>
      </div>
    </div>
  );
}
